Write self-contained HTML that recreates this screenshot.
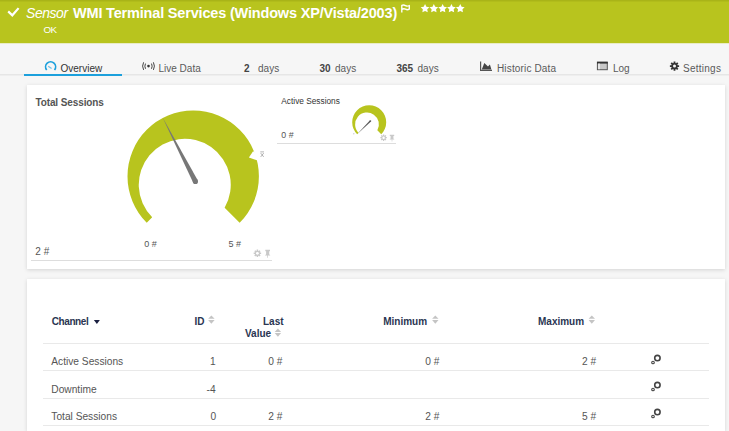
<!DOCTYPE html>
<html><head><meta charset="utf-8">
<style>
html,body{margin:0;padding:0;}
html{width:729px;height:431px;overflow:hidden;}
body{width:729px;height:431px;overflow:hidden;position:relative;background:#f6f6f6;font-family:"Liberation Sans",sans-serif;}
.t{position:absolute;line-height:1;white-space:nowrap;}
#hdr{position:absolute;left:0;top:0;width:729px;height:43px;background:#b8c41e;}
#hdrtop{position:absolute;left:0;top:0;width:729px;height:1px;background:#a9b418;border-bottom:1px solid #b1bc1b;}
.w{color:#fff;}
.tab{color:#5a5a5a;font-size:10px;}
.tabb{color:#444;font-size:10px;font-weight:bold;}
#tabline{position:absolute;left:0;top:74px;width:729px;height:1px;background:#e6e6e6;border-bottom:1px solid #eeeeee;}
#tabsel{position:absolute;left:24px;top:74px;width:98px;height:2px;background:#1ca0dc;}
.panel{position:absolute;background:#fff;box-shadow:0 1px 4px rgba(0,0,0,0.14);}
.g{color:#555;}
.th{color:#2a3552;font-size:10px;font-weight:bold;}
.td{color:#555;font-size:10.2px;}
.hl{position:absolute;height:1px;background:#e9e9e9;}
</style></head><body>
<div id="hdr"></div>
<div id="hdrtop"></div>
<div style="position:absolute;left:0;top:43px;width:729px;height:1px;background:#e9ecc6;"></div>
<svg style="position:absolute;left:0;top:0" width="729" height="43">
  <polyline points="8.2,11.4 12.3,15.3 18.6,8.1" fill="none" stroke="#fff" stroke-width="2.2"/>
  <path d="M401.8,12.4 V5.3 Q403.6,4.5 405.5,5.6 T409.3,5.5 V9.2 Q407.4,10.2 405.5,9.2 T401.8,9.5" fill="none" stroke="#fff" stroke-width="1.35" stroke-linejoin="round"/>
<polygon points="425.05,4.00 426.40,6.74 429.42,7.18 427.24,9.31 427.75,12.32 425.05,10.90 422.35,12.32 422.86,9.31 420.68,7.18 423.70,6.74" fill="#fff"/>
<polygon points="433.85,4.00 435.20,6.74 438.22,7.18 436.04,9.31 436.55,12.32 433.85,10.90 431.15,12.32 431.66,9.31 429.48,7.18 432.50,6.74" fill="#fff"/>
<polygon points="442.65,4.00 444.00,6.74 447.02,7.18 444.84,9.31 445.35,12.32 442.65,10.90 439.95,12.32 440.46,9.31 438.28,7.18 441.30,6.74" fill="#fff"/>
<polygon points="451.45,4.00 452.80,6.74 455.82,7.18 453.64,9.31 454.15,12.32 451.45,10.90 448.75,12.32 449.26,9.31 447.08,7.18 450.10,6.74" fill="#fff"/>
<polygon points="460.25,4.00 461.60,6.74 464.62,7.18 462.44,9.31 462.95,12.32 460.25,10.90 457.55,12.32 458.06,9.31 455.88,7.18 458.90,6.74" fill="#fff"/>
</svg>
<div class="t w" style="left:26px;top:6.15px;font-size:14px;font-style:italic;letter-spacing:-0.45px;">Sensor</div>
<div class="t w" style="left:73px;top:5.63px;font-size:14.5px;font-weight:bold;letter-spacing:-0.18px;">WMI Terminal Services (Windows XP/Vista/2003)</div>
<div class="t w" style="left:43.6px;top:25.2px;font-size:9.8px;letter-spacing:-0.75px;">OK</div>

<!-- tabs -->
<div id="tabline"></div>
<svg style="position:absolute;left:0;top:0" width="729" height="80">
  <path d="M46.7,70 A5,5 0 1 1 54.5,70" fill="none" stroke="#1ca0dc" stroke-width="1.7"/>
  <line x1="48.2" y1="66.2" x2="51.6" y2="68.6" stroke="#6cc0e8" stroke-width="1.2"/>
  <g fill="none" stroke="#444" stroke-width="1">
    <path d="M145.5,63.6 Q144.2,66.2 145.5,68.8"/>
    <path d="M151.5,63.6 Q152.8,66.2 151.5,68.8"/>
    <path d="M143.6,62.3 Q141.6,66.1 143.6,69.9"/>
    <path d="M153.4,62.3 Q155.4,66.1 153.4,69.9"/>
  </g>
  <circle cx="148.5" cy="66.1" r="1.3" fill="#333"/>
  <path d="M480.6,61.5 V70.3 H492" fill="none" stroke="#555" stroke-width="1.2"/>
  <path d="M481.8,69.6 L484.3,63 L488,66.6 L489.9,64.4 L491.4,69.6 Z" fill="#444"/>
  <rect x="597.4" y="62.2" width="9.9" height="7.5" fill="#c8c8c8" stroke="#555" stroke-width="1"/>
  <rect x="597" y="61.8" width="10.7" height="1.8" fill="#333"/>
  <rect x="598" y="63.6" width="2" height="5.6" fill="#e6e6e6"/>
  <polygon points="673.60,61.49 675.40,61.49 675.44,62.94 676.07,63.20 677.13,62.20 678.40,63.47 677.40,64.53 677.66,65.16 679.11,65.20 679.11,67.00 677.66,67.04 677.40,67.67 678.40,68.73 677.13,70.00 676.07,69.00 675.44,69.26 675.40,70.71 673.60,70.71 673.56,69.26 672.93,69.00 671.87,70.00 670.60,68.73 671.60,67.67 671.34,67.04 669.89,67.00 669.89,65.20 671.34,65.16 671.60,64.53 670.60,63.47 671.87,62.20 672.93,63.20 673.56,62.94" fill="#333"/>
  <circle cx="674.5" cy="66.1" r="1.5" fill="#f6f6f6"/>
</svg>
<div id="tabsel"></div>
<div class="t tab" style="left:60.5px;top:63.6px;color:#333;">Overview</div>
<div class="t tab" style="left:158.5px;top:63.6px;">Live Data</div>
<div class="t tabb" style="left:244px;top:63.6px;">2</div>
<div class="t tab" style="left:258px;top:63.6px;letter-spacing:0.05px;">days</div>
<div class="t tabb" style="left:319.5px;top:63.6px;">30</div>
<div class="t tab" style="left:335px;top:63.6px;letter-spacing:0.05px;">days</div>
<div class="t tabb" style="left:396.5px;top:63.6px;">365</div>
<div class="t tab" style="left:417.5px;top:63.6px;letter-spacing:0.05px;">days</div>
<div class="t tab" style="left:497px;top:63.6px;letter-spacing:0.15px;">Historic Data</div>
<div class="t tab" style="left:613px;top:63.6px;">Log</div>
<div class="t tab" style="left:683px;top:63.6px;letter-spacing:0.25px;">Settings</div>

<!-- panel 1 -->
<div class="panel" style="left:27px;top:85px;width:698px;height:184px;"></div>
<div class="t" style="left:35.4px;top:98.1px;font-size:10px;font-weight:bold;color:#555;letter-spacing:-0.1px;">Total Sessions</div>
<svg style="position:absolute;left:0;top:0" width="729" height="300">
  <path d="M146.74,222.76 A65.7,65.7 0 1 1 239.66,222.76 L224.63,207.73 A46,46 0 1 0 152.20,217.30 Z" fill="#b8c41e"/>
  <polygon points="253.1,151.3 248.9,157.4 256.8,160.2 259.5,155 " fill="#fff"/>
  <polygon points="162.6,117.5 193.09,182.59 197.71,180.21" fill="#777"/>
  <circle cx="195.4" cy="181.4" r="2.6" fill="#777"/>
  <path d="M260.3,151.9 H264 M260.7,153.1 L263.7,156.9 M263.7,153.1 L260.7,156.9" stroke="#9a9a9a" stroke-width="0.75" fill="none"/>
  <path d="M357.18,134.22 A17,17 0 1 1 381.22,134.22 L377.33,130.33 A11.9026,11.9026 0 1 0 358.59,132.81 Z" fill="#b8c41e"/>
  <polygon points="357.3,134.1 371.00,121.60 369.80,120.40" fill="#5a5a5a"/>
  <circle cx="370.4" cy="121.0" r="0.85" fill="#5a5a5a"/>
  <polygon points="256.67,249.57 258.13,249.57 258.17,250.71 258.69,250.93 259.52,250.15 260.55,251.18 259.77,252.01 259.99,252.53 261.13,252.57 261.13,254.03 259.99,254.07 259.77,254.59 260.55,255.42 259.52,256.45 258.69,255.67 258.17,255.89 258.13,257.03 256.67,257.03 256.63,255.89 256.11,255.67 255.28,256.45 254.25,255.42 255.03,254.59 254.81,254.07 253.67,254.03 253.67,252.57 254.81,252.53 255.03,252.01 254.25,251.18 255.28,250.15 256.11,250.93 256.63,250.71" fill="#c9c9c9"/>
  <circle cx="257.4" cy="253.3" r="1.4" fill="#fff"/>
  <path d="M265.3,249.8 H270 V251.3 H269.2 V254.2 L270.4,255.4 H264.9 L266.1,254.2 V251.3 H265.3 Z M267.3,255.4 H268 V257.8 H267.3 Z" fill="#c9c9c9"/>
  <polygon points="382.97,134.46 384.23,134.46 384.27,135.45 384.72,135.63 385.45,134.96 386.34,135.85 385.67,136.58 385.85,137.03 386.84,137.07 386.84,138.33 385.85,138.37 385.67,138.82 386.34,139.55 385.45,140.44 384.72,139.77 384.27,139.95 384.23,140.94 382.97,140.94 382.93,139.95 382.48,139.77 381.75,140.44 380.86,139.55 381.53,138.82 381.35,138.37 380.36,138.33 380.36,137.07 381.35,137.03 381.53,136.58 380.86,135.85 381.75,134.96 382.48,135.63 382.93,135.45" fill="#c9c9c9"/>
  <circle cx="383.6" cy="137.7" r="1.2" fill="#fff"/>
  <path d="M389.8,134.8 H394.2 V136.1 H393.4 V138.6 L394.5,139.6 H389.5 L390.6,138.6 V136.1 H389.8 Z M391.7,139.6 H392.3 V141.6 H391.7 Z" fill="#c9c9c9"/>
  <circle cx="353.8" cy="133.7" r="0.7" fill="#ccc"/>
</svg>

<div class="t g" style="left:35.3px;top:246.5px;font-size:10px;">2 #</div>
<div class="t g" style="left:144.3px;top:240.2px;font-size:9px;">0 #</div>
<div class="t g" style="left:228.6px;top:240.2px;font-size:9px;">5 #</div>
<div class="hl" style="left:31px;top:260px;width:241px;background:#ddd;"></div>

<div class="t" style="left:281.3px;top:96.9px;font-size:8.3px;color:#333;">Active Sessions</div>
<div class="t g" style="left:281.3px;top:131.3px;font-size:8.8px;">0 #</div>
<div class="hl" style="left:277px;top:143px;width:119px;background:#ddd;"></div>

<!-- panel 2 -->
<div class="panel" style="left:27px;top:279px;width:698px;height:152px;"></div>
<div class="t th" style="left:51.7px;top:316.5px;letter-spacing:-0.4px;">Channel</div>
<div class="t th" style="left:194.5px;top:316.5px;">ID</div>
<div class="t th" style="left:263px;top:316.5px;">Last</div>
<div class="t th" style="left:245px;top:329.1px;">Value</div>
<div class="t th" style="left:383.2px;top:316.5px;">Minimum</div>
<div class="t th" style="left:538px;top:316.5px;">Maximum</div>
<div class="hl" style="left:43px;top:343px;width:666px;"></div>
<div class="hl" style="left:43px;top:370px;width:666px;"></div>
<div class="hl" style="left:43px;top:398px;width:666px;"></div>
<div class="hl" style="left:43px;top:425px;width:666px;"></div>

<div class="t td" style="left:51.3px;top:357.4px;">Active Sessions</div>
<div class="t td" style="left:210px;top:357.4px;">1</div>
<div class="t td" style="left:268.2px;top:357.4px;">0 #</div>
<div class="t td" style="left:425.3px;top:357.4px;">0 #</div>
<div class="t td" style="left:582px;top:357.4px;">2 #</div>

<div class="t td" style="left:51.3px;top:384.6px;">Downtime</div>
<div class="t td" style="left:206.6px;top:384.6px;">-4</div>

<div class="t td" style="left:51.3px;top:411.6px;">Total Sessions</div>
<div class="t td" style="left:210.5px;top:411.6px;">0</div>
<div class="t td" style="left:268.2px;top:411.6px;">2 #</div>
<div class="t td" style="left:425.3px;top:411.6px;">2 #</div>
<div class="t td" style="left:582px;top:411.6px;">5 #</div>
<svg style="position:absolute;left:0;top:280px" width="729" height="151" viewBox="0 280 729 151">
  <polygon points="93.9,320 99.9,320 96.9,323.9" fill="#1a2040"/>
  <g fill="#c4c4c4">
    <polygon points="211.35,315.5 214.6,318.8 208.1,318.8"/><polygon points="208.1,320 214.6,320 211.35,323.7"/>
    <polygon points="277.9,328.6 281.1,331.9 274.7,331.9"/><polygon points="274.7,333.1 281.1,333.1 277.9,336.8"/>
    <polygon points="435.3,315.5 438.5,318.8 432.1,318.8"/><polygon points="432.1,320 438.5,320 435.3,323.7"/>
    <polygon points="591.8,315.5 595,318.8 588.6,318.8"/><polygon points="588.6,320 595,320 591.8,323.7"/>
  </g>
  <g fill="none" stroke="#444">
    <circle cx="657.4" cy="358.1" r="2.7" stroke-width="1.6"/><circle cx="653" cy="362.5" r="1.3" stroke-width="1.1"/>
    <circle cx="657.4" cy="385.1" r="2.7" stroke-width="1.6"/><circle cx="653" cy="389.5" r="1.3" stroke-width="1.1"/>
    <circle cx="657.4" cy="412.1" r="2.7" stroke-width="1.6"/><circle cx="653" cy="416.5" r="1.3" stroke-width="1.1"/>
  </g>

</svg>
</body></html>
